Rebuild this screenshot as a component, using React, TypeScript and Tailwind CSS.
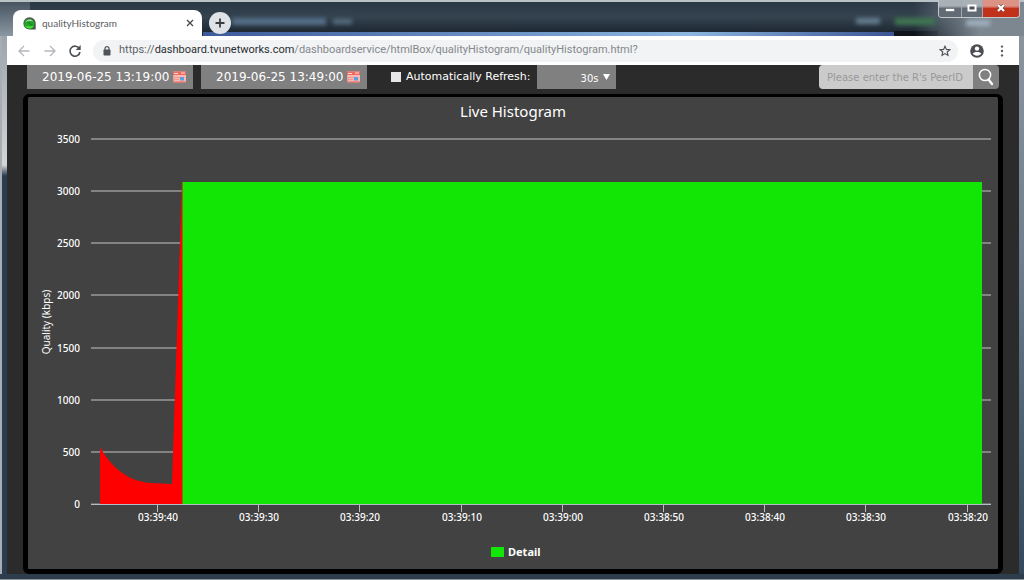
import React from "react";

const yTicks = [3500, 3000, 2500, 2000, 1500, 1000, 500, 0];
const xTicks = [
  "03:39:40",
  "03:39:30",
  "03:39:20",
  "03:39:10",
  "03:39:00",
  "03:38:50",
  "03:38:40",
  "03:38:30",
  "03:38:20",
];

const PLOT = { left: 63, right: 963, top: 42, bottom: 407 };
const yAt = (v: number) =>
  Math.round(PLOT.bottom - (v / 3500) * (PLOT.bottom - PLOT.top));
const xAt = (i: number) => Math.round(129 + i * 101.2);

function Favicon() {
  return (
    <svg className="size-[13px] shrink-0" viewBox="0 0 13 13" aria-hidden="true">
      <path d="M6.500 .3a6.200 6.200 0 0 1 6.200 6.200v6H6.500a6.100 6.100 0 0 1 0-12.200z" fill="#4a524a" />
      <circle cx="6.300" cy="6.700" r="5.200" fill="#23a526" />
      <path d="M2 8.500c2 3.600 7 3.800 8.800.2-2.500 1-5.600 1-8.800-.2z" fill="#46e83e" />
      <path d="M2.600 5.200c1-3 5.500-3.800 7.400-.8-2.300-.8-5-.6-7.400.8z" fill="#b4d0b2" />
      <path d="M4 4.500l5.500 4" stroke="#0c5c14" strokeWidth=".6" />
    </svg>
  );
}

function CalendarIcon() {
  return (
    <svg className="h-[12px] w-[13px]" viewBox="0 0 13 12" aria-hidden="true">
      <path d="M0 .5h13v11H.5z" fill="#f7b9b2" />
      <path d="M0 .5h13v3.500H0z" fill="#ee6a60" />
      <path d="M1 2.500h4M8 2h4" stroke="#ffd9d4" strokeWidth="1" />
      <path d="M1 6.500h6M1 8.500h5" stroke="#f3958b" strokeWidth="1" />
      <path d="M.5 11h12.500" stroke="#e85e54" strokeWidth="1" />
      <rect x="7" y="6" width="4" height="3.500" fill="#5d9fe0" />
    </svg>
  );
}

function DateField({ label, value }: { label: string; value: string }) {
  return (
    <div className="flex h-6 w-[166px] items-center bg-[#808080] pr-[7px] pl-[15px]">
      <input
        type="text"
        aria-label={label}
        defaultValue={value}
        className="min-w-0 flex-1 bg-transparent text-[12px] leading-4 text-white outline-none"
      />
      <button type="button" aria-label={"Pick " + label}>
        <CalendarIcon />
      </button>
    </div>
  );
}

function WindowControls() {
  return (
    <div className="absolute top-[-2px] right-[4px] flex h-[18px] overflow-hidden rounded-b border border-t-0 border-[#c3c9ce]">
      <button
        type="button"
        aria-label="Minimize"
        className="flex w-[23px] justify-center border-r border-[#a3abb2] bg-linear-to-b from-[#a9b0b6] from-35% to-[#626b74] to-50% pt-[8px]"
      >
        <svg className="h-[4px] w-[10px]" viewBox="0 0 10 4" aria-hidden="true">
          <rect x=".5" y=".5" width="9" height="3" fill="#fff" stroke="#59616a" strokeWidth=".6" />
        </svg>
      </button>
      <button
        type="button"
        aria-label="Maximize"
        className="flex w-[21px] justify-center border-r border-[#a3abb2] bg-linear-to-b from-[#a9b0b6] from-35% to-[#626b74] to-50% pt-[4px]"
      >
        <svg className="h-[8px] w-[10px]" viewBox="0 0 10 8" aria-hidden="true">
          <rect x="1.500" y="1.500" width="7" height="5" fill="#4a535c" stroke="#fff" strokeWidth="2" />
        </svg>
      </button>
      <button
        type="button"
        aria-label="Close"
        className="flex w-[36px] justify-center bg-linear-to-b from-[#dc9385] from-35% to-[#c2321a] to-50% pt-[4px]"
      >
        <svg className="h-[8px] w-[10px]" viewBox="0 0 10 8" aria-hidden="true">
          <path d="M2 1l6 6M8 1L2 7" stroke="#69423c" strokeWidth="3.200" />
          <path d="M2 1l6 6M8 1L2 7" stroke="#fff" strokeWidth="2.200" />
        </svg>
      </button>
    </div>
  );
}

function TitleBar() {
  return (
    <header className="relative flex h-9 items-end border-t-2 border-[#b9c3c5] bg-linear-to-b from-[#2b3845] via-[#34434f] via-45% to-[#18212b] pl-[13px]">
      <div className="absolute inset-y-0 left-0 w-[30px] bg-linear-to-b from-[#485561] to-[#8b98a4]" />
      <div className="absolute right-[128px] bottom-0 left-[203px] h-[4px] bg-linear-to-r from-[#3d5a9b] via-[#8cb7df] via-70% to-[#3b5493]" />
      <div className="absolute right-[86px] bottom-0 h-[5px] w-[44px] bg-[#10151c]" />
      <div className="absolute inset-y-0 right-0 w-[110px] bg-linear-to-l from-[#7d8790] from-40% to-transparent" />
      <div className="absolute top-[16px] left-[232px] h-[7px] w-[94px] bg-[#56708a] blur-[2px]" />
      <div className="absolute top-[17px] left-[333px] h-[5px] w-[19px] bg-[#587083] blur-[2px]" />
      <div className="absolute top-[16px] right-[144px] h-[6px] w-[24px] bg-[#657e91] blur-[2px]" />
      <div className="absolute top-[16px] right-[89px] h-[7px] w-[40px] bg-[#3f7650] blur-[2px]" />
      <div className="absolute top-[18px] right-[34px] h-[6px] w-[24px] bg-[#9fb0be] blur-[2px]" />
      <div className="relative flex h-[26px] w-[189px] items-center rounded-t-lg bg-white pr-[8px] pl-[10px]">
        <Favicon />
        <span className="ml-[6px] flex-1 font-[Lato,sans-serif] text-[10px] text-[#5a5d61]">
          qualityHistogram
        </span>
        <button type="button" aria-label="Close tab">
          <svg className="size-[8px]" viewBox="0 0 8 8" aria-hidden="true">
            <path d="M1 1l6 6M7 1L1 7" stroke="#44474b" strokeWidth="1.300" />
          </svg>
        </button>
      </div>
      <button
        type="button"
        aria-label="New tab"
        className="relative mb-[2px] ml-[7px] flex size-[22px] items-center justify-center rounded-full bg-[#dfe3e8]"
      >
        <svg className="size-[10px]" viewBox="0 0 10 10" aria-hidden="true">
          <path d="M5 .5v9M.5 5h9" stroke="#3a3e43" strokeWidth="1.800" />
        </svg>
      </button>
      <WindowControls />
    </header>
  );
}

function AddressBar() {
  return (
    <nav className="flex h-[29px] items-center bg-white pr-[15px] pl-[11px]">
      <button type="button" aria-label="Back">
        <svg className="size-[12px]" viewBox="0 0 12 12" aria-hidden="true">
          <path d="M11.500 6H1.500M6 1L1 6l5 5" fill="none" stroke="#b5b7ba" strokeWidth="1.300" />
        </svg>
      </button>
      <button type="button" aria-label="Forward" className="ml-[14px]">
        <svg className="size-[12px]" viewBox="0 0 12 12" aria-hidden="true">
          <path d="M.5 6h10M6 1l5 5-5 5" fill="none" stroke="#b5b7ba" strokeWidth="1.300" />
        </svg>
      </button>
      <button type="button" aria-label="Reload" className="ml-[13px]">
        <svg className="size-[12px]" viewBox="0 0 12 12" aria-hidden="true">
          <path d="M10.300 3.500A5 5 0 1 0 11 7" fill="none" stroke="#4b4e52" strokeWidth="1.600" />
          <path d="M11.700 0v5H6.700z" fill="#4b4e52" />
        </svg>
      </button>
      <div className="ml-[12px] flex h-[22px] min-w-0 flex-1 items-center rounded-full bg-[#f1f3f4] pr-[7px] pl-[10px]">
        <svg className="h-[10px] w-[8px] shrink-0" viewBox="0 0 8 10" aria-hidden="true">
          <rect x=".5" y="3.500" width="7" height="6" rx=".8" fill="#505357" />
          <path d="M2 4V2.600a2 2 0 0 1 4 0V4" fill="none" stroke="#505357" strokeWidth="1.200" />
        </svg>
        <a
          href="#histogram"
          className="ml-[8px] flex-1 truncate font-[Roboto,sans-serif] text-[11px] text-[#85888c]"
        >
          <span className="text-[#606367]">https://</span>
          <span className="text-[#2b2d30]">dashboard.tvunetworks.com</span>
          /dashboardservice/htmlBox/qualityHistogram/qualityHistogram.html?
        </a>
        <button type="button" aria-label="Bookmark this page">
          <svg className="size-[12px]" viewBox="0 0 12 12" aria-hidden="true">
            <path
              d="M6 1.200l1.400 3.200 3.500.3-2.700 2.300.8 3.400L6 8.600l-3 1.800.8-3.400L1.100 4.700l3.500-.3z"
              fill="none"
              stroke="#4b4e52"
              strokeWidth="1.100"
            />
          </svg>
        </button>
      </div>
      <button type="button" aria-label="Profile" className="ml-[12px]">
        <svg className="size-[14px]" viewBox="0 0 14 14" aria-hidden="true">
          <circle cx="7" cy="7" r="6.800" fill="#4b4e52" />
          <circle cx="7" cy="4.600" r="2.200" fill="#fff" />
          <path d="M2.700 9.600C4 7.500 10 7.500 11.300 9.600 9.500 12.300 4.500 12.300 2.700 9.600z" fill="#fff" />
        </svg>
      </button>
      <button type="button" aria-label="Menu" className="ml-[16px]">
        <svg className="h-[12px] w-[4px]" viewBox="0 0 4 12" aria-hidden="true">
          <circle cx="2" cy="1.600" r="1.200" fill="#5b5e62" />
          <circle cx="2" cy="6" r="1.200" fill="#5b5e62" />
          <circle cx="2" cy="10.400" r="1.200" fill="#5b5e62" />
        </svg>
      </button>
    </nav>
  );
}

function FilterBar() {
  return (
    <form className="flex h-6 items-center pr-[20px] pl-[20px] font-['DejaVu_Sans',sans-serif]">
      <DateField label="start time" value="2019-06-25 13:19:00" />
      <div className="w-2 shrink-0" />
      <DateField label="end time" value="2019-06-25 13:49:00" />
      <label className="ml-[24px] flex items-center gap-[5px] text-[11px] whitespace-nowrap text-white">
        <input type="checkbox" className="size-[10px] appearance-none bg-[#e6e6e6] checked:bg-[#12e605]" />
        Automatically Refresh:
      </label>
      <div className="relative ml-[6px] h-6 w-[79px] bg-[#808080]">
        <select
          aria-label="Refresh interval"
          className="h-6 w-full appearance-none bg-transparent pr-[17px] text-right text-[10px] text-white outline-none"
          defaultValue="30s"
        >
          <option>30s</option>
          <option>60s</option>
        </select>
        <svg
          className="pointer-events-none absolute top-[9px] right-[6px] h-[6px] w-[7px]"
          viewBox="0 0 7 6"
          aria-hidden="true"
        >
          <path d="M0 0h7L3.500 6z" fill="#fff" />
        </svg>
      </div>
      <div className="ml-auto flex h-6 overflow-hidden rounded-sm">
        <input
          type="text"
          aria-label="PeerID"
          placeholder="Please enter the R's PeerID"
          className="w-[154px] bg-[#cbcbcb] pl-[8px] text-[10px] text-[#333] outline-none placeholder:text-[#999]"
        />
        <button type="button" aria-label="Search" className="flex w-[26px] items-center justify-center bg-[#808080]">
          <svg className="h-[18px] w-[16px]" viewBox="0 0 16 18" aria-hidden="true">
            <circle cx="7" cy="7" r="5.600" fill="none" stroke="#fff" strokeWidth="1.500" />
            <path d="M10.500 11.500l3.500 4.500" stroke="#fff" strokeWidth="2.300" strokeLinecap="round" />
          </svg>
        </button>
      </div>
    </form>
  );
}

function Histogram() {
  const peak = 85;
  return (
    <svg
      id="histogram"
      className="block h-auto w-full font-['Noto_Sans',sans-serif]"
      viewBox="0 0 970 472"
      role="img"
      aria-label="Live Histogram"
    >
      <text x="485" y="20" textAnchor="middle" fill="#fff" className="text-[15px]">
        Live Histogram
      </text>
      {yTicks.map((v) => (
        <g key={v}>
          <line
            x1={PLOT.left}
            x2={PLOT.right}
            y1={yAt(v)}
            y2={yAt(v)}
            stroke="#9a9a9a"
            strokeWidth={v === 0 ? 1 : 1.5}
          />
          <text x="52" y={yAt(v) + 4} textAnchor="end" fill="#fff" className="text-[10px] font-medium">
            {v}
          </text>
        </g>
      ))}
      <path
        d={`M72 ${PLOT.bottom}V350C82 368 98 384 122 386L144 387L154 ${peak}H155V${PLOT.bottom}z`}
        fill="#ff0000"
      />
      <rect x="154.500" y={peak} width="799.500" height={PLOT.bottom - peak} fill="#12e605" />
      <line x1={PLOT.left} x2={PLOT.right} y1="407.500" y2="407.500" stroke="#b4bcc6" />
      {xTicks.map((t, i) => (
        <g key={t}>
          <line x1={xAt(i) + 0.5} x2={xAt(i) + 0.5} y1="408" y2="415" stroke="#b4bcc6" />
          <text x={xAt(i) + 1} y="424" textAnchor="middle" fill="#fff" className="text-[10px] font-medium">
            {t}
          </text>
        </g>
      ))}
      <text
        transform="translate(22 225) rotate(-90)"
        textAnchor="middle"
        fill="#fff"
        className="text-[10px]"
      >
        Quality (kbps)
      </text>
      <rect x="463" y="450" width="13" height="10" fill="#12e605" />
      <text x="480" y="459" fill="#fff" className="text-[11px] font-bold">
        Detail
      </text>
    </svg>
  );
}

export default function App() {
  return (
    <div className="min-h-screen bg-[#2e3d4c]">
      <TitleBar />
      <div className="flex border-b border-[#8c949b] pb-[5px]">
        <div className="w-[7px] shrink-0 border-l-2 border-[#a9adb2] bg-linear-to-b from-[#9aa5af] via-[#d5d5d8] via-24% to-[#2a3c52] to-26%" />
        <div className="min-w-0 flex-1 bg-[#2b2b2b]">
          <AddressBar />
          <FilterBar />
          <main className="mt-[5px] mr-[16px] ml-[16px] rounded-md border-[5px] border-t-[3px] border-black bg-[#424242]">
            <Histogram />
          </main>
        </div>
        <div className="w-[5px] shrink-0 bg-linear-to-b from-[#8a949d] via-[#6f7f8d] via-40% to-[#33485b]" />
      </div>
    </div>
  );
}
